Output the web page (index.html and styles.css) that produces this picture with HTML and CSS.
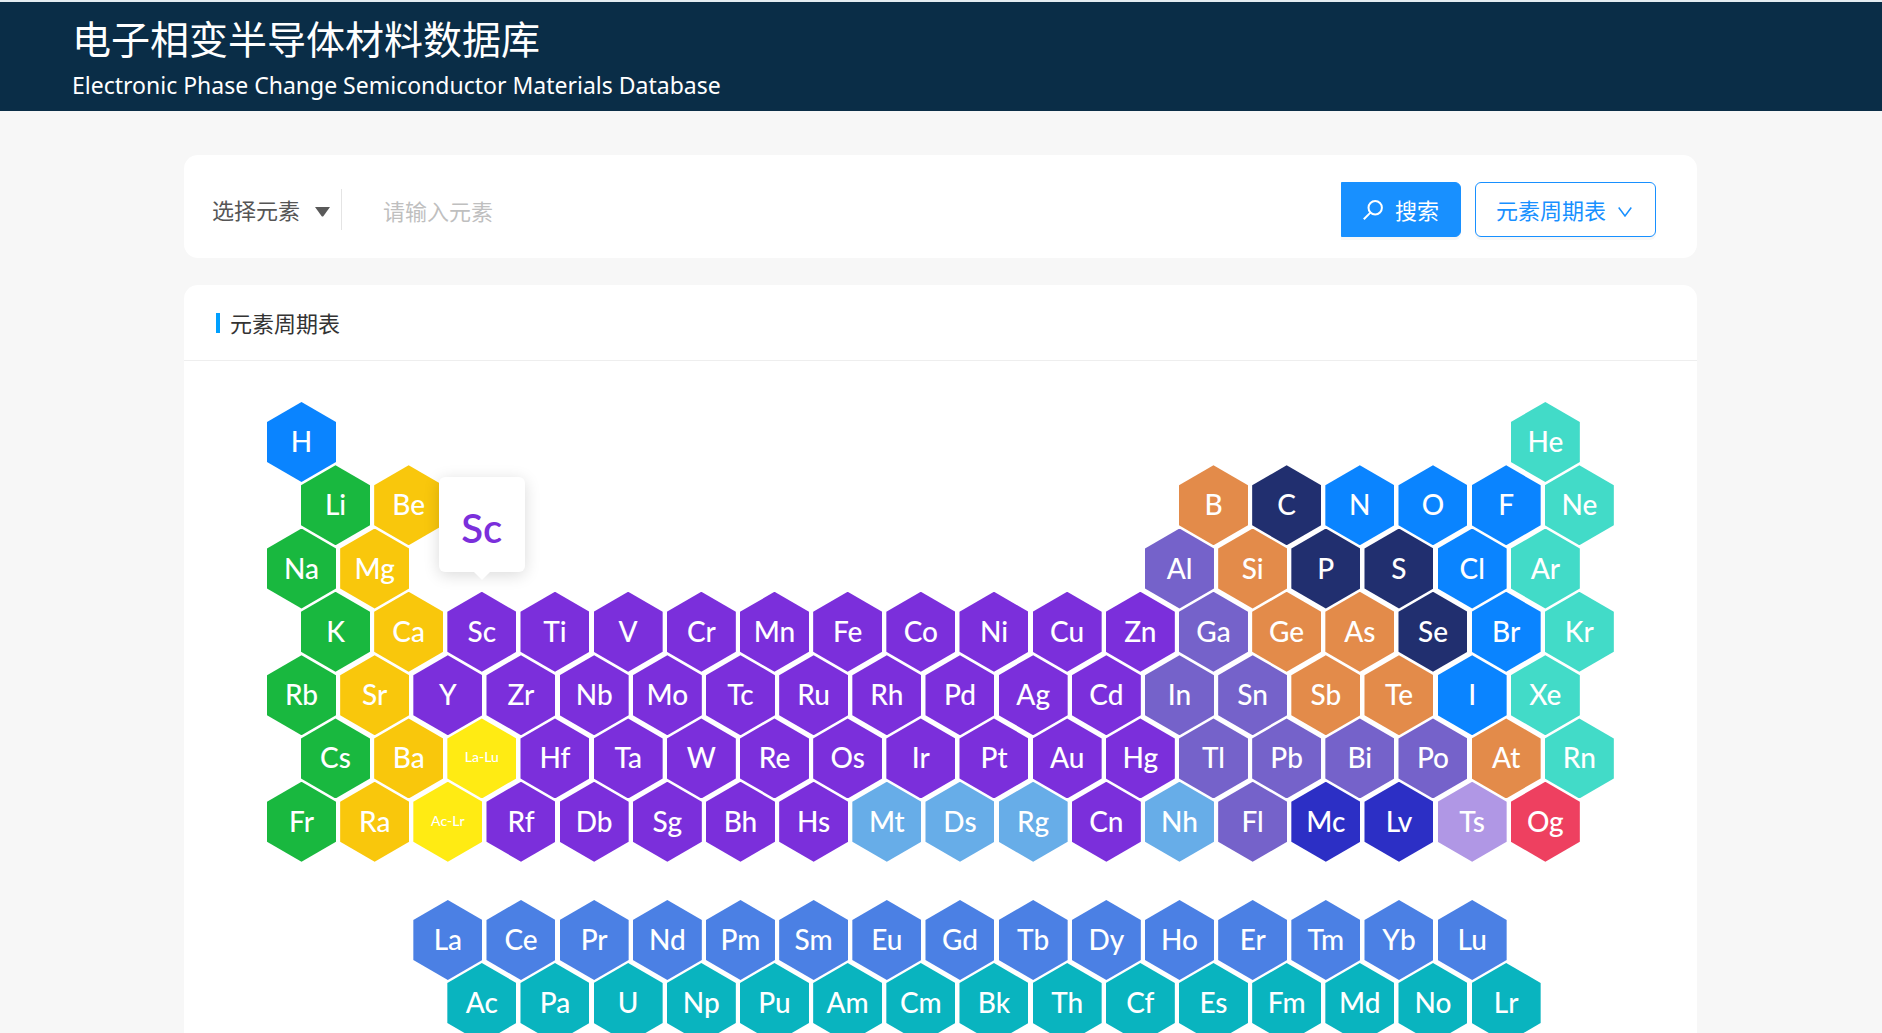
FILE: index.html
```html
<!DOCTYPE html>
<html lang="zh-CN">
<head>
<meta charset="utf-8">
<meta name="viewport" content="width=device-width, initial-scale=1">
<title>电子相变半导体材料数据库</title>
<link rel="stylesheet" href="styles.css">
</head>
<body>
<header class="site-header">
  <h1 class="site-title">电子相变半导体材料数据库</h1>
  <p class="site-subtitle">Electronic Phase Change Semiconductor Materials Database</p>
</header>
<main class="content">
  <form class="card search">
    <div class="picker">
      <select class="picker-select" aria-label="选择元素"><option>选择元素</option></select>
      <svg class="picker-caret" viewBox="0 0 15 10" aria-hidden="true"><path d="M0 0h15L8.500 9q-1 1-2 0z"/></svg>
    </div>
    <input class="search-input" type="text" placeholder="请输入元素" aria-label="请输入元素">
    <button class="btn btn-primary" type="submit">
      <svg class="icon-search" viewBox="0 0 20 20" aria-hidden="true"><circle cx="12.200" cy="7.800" r="6.700"/><path d="M7.400 12.600L.8 19.200"/></svg>
      搜索
    </button>
    <button class="btn btn-outline" type="button">
      元素周期表
      <svg class="icon-down" viewBox="0 0 14 10" aria-hidden="true"><path d="M.7.5L7 9 13.300.5"/></svg>
    </button>
  </form>

  <section class="card">
    <h2 class="card-title">元素周期表</h2>
    <div class="table">
      <div class="series series-main">
        <div class="row">
          <button class="hex nonmetal">H</button>
          <button class="hex noble col-18">He</button>
        </div>
        <div class="row shifted">
          <button class="hex alkali">Li</button>
          <button class="hex earth">Be</button>
          <button class="hex metalloid col-13">B</button>
          <button class="hex solid">C</button>
          <button class="hex nonmetal">N</button>
          <button class="hex nonmetal">O</button>
          <button class="hex nonmetal">F</button>
          <button class="hex noble">Ne</button>
        </div>
        <div class="row">
          <button class="hex alkali">Na</button>
          <button class="hex earth">Mg</button>
          <button class="hex post col-13">Al</button>
          <button class="hex metalloid">Si</button>
          <button class="hex solid">P</button>
          <button class="hex solid">S</button>
          <button class="hex nonmetal">Cl</button>
          <button class="hex noble">Ar</button>
        </div>
        <div class="row shifted">
          <button class="hex alkali">K</button>
          <button class="hex earth">Ca</button>
          <div class="cell">
            <button class="hex transition" aria-describedby="tip">Sc</button>
            <div class="tip" id="tip" role="tooltip">Sc</div>
          </div>
          <button class="hex transition">Ti</button>
          <button class="hex transition">V</button>
          <button class="hex transition">Cr</button>
          <button class="hex transition">Mn</button>
          <button class="hex transition">Fe</button>
          <button class="hex transition">Co</button>
          <button class="hex transition">Ni</button>
          <button class="hex transition">Cu</button>
          <button class="hex transition">Zn</button>
          <button class="hex post">Ga</button>
          <button class="hex metalloid">Ge</button>
          <button class="hex metalloid">As</button>
          <button class="hex solid">Se</button>
          <button class="hex nonmetal">Br</button>
          <button class="hex noble">Kr</button>
        </div>
        <div class="row">
          <button class="hex alkali">Rb</button>
          <button class="hex earth">Sr</button>
          <button class="hex transition">Y</button>
          <button class="hex transition">Zr</button>
          <button class="hex transition">Nb</button>
          <button class="hex transition">Mo</button>
          <button class="hex transition">Tc</button>
          <button class="hex transition">Ru</button>
          <button class="hex transition">Rh</button>
          <button class="hex transition">Pd</button>
          <button class="hex transition">Ag</button>
          <button class="hex transition">Cd</button>
          <button class="hex post">In</button>
          <button class="hex post">Sn</button>
          <button class="hex metalloid">Sb</button>
          <button class="hex metalloid">Te</button>
          <button class="hex nonmetal">I</button>
          <button class="hex noble">Xe</button>
        </div>
        <div class="row shifted">
          <button class="hex alkali">Cs</button>
          <button class="hex earth">Ba</button>
          <button class="hex range">La-Lu</button>
          <button class="hex transition">Hf</button>
          <button class="hex transition">Ta</button>
          <button class="hex transition">W</button>
          <button class="hex transition">Re</button>
          <button class="hex transition">Os</button>
          <button class="hex transition">Ir</button>
          <button class="hex transition">Pt</button>
          <button class="hex transition">Au</button>
          <button class="hex transition">Hg</button>
          <button class="hex post">Tl</button>
          <button class="hex post">Pb</button>
          <button class="hex post">Bi</button>
          <button class="hex post">Po</button>
          <button class="hex metalloid">At</button>
          <button class="hex noble">Rn</button>
        </div>
        <div class="row">
          <button class="hex alkali">Fr</button>
          <button class="hex earth">Ra</button>
          <button class="hex range">Ac-Lr</button>
          <button class="hex transition">Rf</button>
          <button class="hex transition">Db</button>
          <button class="hex transition">Sg</button>
          <button class="hex transition">Bh</button>
          <button class="hex transition">Hs</button>
          <button class="hex unknown">Mt</button>
          <button class="hex unknown">Ds</button>
          <button class="hex unknown">Rg</button>
          <button class="hex transition">Cn</button>
          <button class="hex unknown">Nh</button>
          <button class="hex post">Fl</button>
          <button class="hex heavy">Mc</button>
          <button class="hex heavy">Lv</button>
          <button class="hex halogen">Ts</button>
          <button class="hex oganesson">Og</button>
        </div>
      </div>
      <div class="series series-inner">
        <div class="row">
          <button class="hex lanthanide col-3">La</button>
          <button class="hex lanthanide">Ce</button>
          <button class="hex lanthanide">Pr</button>
          <button class="hex lanthanide">Nd</button>
          <button class="hex lanthanide">Pm</button>
          <button class="hex lanthanide">Sm</button>
          <button class="hex lanthanide">Eu</button>
          <button class="hex lanthanide">Gd</button>
          <button class="hex lanthanide">Tb</button>
          <button class="hex lanthanide">Dy</button>
          <button class="hex lanthanide">Ho</button>
          <button class="hex lanthanide">Er</button>
          <button class="hex lanthanide">Tm</button>
          <button class="hex lanthanide">Yb</button>
          <button class="hex lanthanide">Lu</button>
        </div>
        <div class="row shifted">
          <button class="hex actinide col-3">Ac</button>
          <button class="hex actinide">Pa</button>
          <button class="hex actinide">U</button>
          <button class="hex actinide">Np</button>
          <button class="hex actinide">Pu</button>
          <button class="hex actinide">Am</button>
          <button class="hex actinide">Cm</button>
          <button class="hex actinide">Bk</button>
          <button class="hex actinide">Th</button>
          <button class="hex actinide">Cf</button>
          <button class="hex actinide">Es</button>
          <button class="hex actinide">Fm</button>
          <button class="hex actinide">Md</button>
          <button class="hex actinide">No</button>
          <button class="hex actinide">Lr</button>
        </div>
      </div>
    </div>
  </section>
</main>
</body>
</html>
```
FILE: styles.css
```css
* {
  box-sizing: border-box;
}

body {
  margin: 0;
  background: #f7f7f7;
  color: #333;
  font-family: "Noto Sans", "Noto Sans CJK SC", sans-serif;
  font-size: 22px;
  line-height: 32px;
}

button,
input,
select {
  font: inherit;
}

/* Header */
.site-header {
  padding: 8px 72px 6px;
  border-top: 2px solid #e3ecf1;
  background: #0a2d47;
  color: #fff;
}

.site-title {
  margin: 0;
  font-family: "Noto Sans CJK SC", sans-serif;
  font-size: 39px;
  font-weight: 400;
  line-height: 55px;
}

.site-subtitle {
  margin: 0;
  font-size: 23px;
  line-height: 40px;
}

/* Cards */
.content {
  display: flex;
  flex-direction: column;
  gap: 27px;
  padding: 44px 185px 27px 184px;
}

.card {
  border-radius: 14px;
  background: #fff;
}

.card-title {
  display: flex;
  align-items: center;
  gap: 10px;
  margin: 0;
  padding: 22px 32px 21px;
  border-bottom: 1px solid #eee;
  font-size: 22px;
  font-weight: 400;
}

.card-title::before {
  content: "";
  width: 4px;
  height: 20px;
  background: #00a0ff;
}

/* Search bar */
.search {
  display: flex;
  align-items: center;
  padding: 27px 41px 21px 28px;
}

.picker {
  display: flex;
  align-items: center;
  height: 41px;
  padding-right: 11px;
  border-right: 1px solid #e4e4e4;
}

.picker-select {
  width: 118px;
  margin-right: -15px;
  padding: 0;
  border: 0;
  background: transparent;
  color: #555;
  appearance: none;
}

.picker-caret {
  width: 15px;
  height: 10px;
  margin-top: 4px;
  fill: #595959;
  pointer-events: none;
}

.search-input {
  flex: 1;
  min-width: 0;
  height: 55px;
  padding: 2px 41px 0;
  border: 0;
  background: transparent;
}

.search-input::placeholder {
  color: #bfbfbf;
}

.btn {
  display: flex;
  align-items: center;
  justify-content: center;
  height: 55px;
  padding: 0 21px;
  border: 1px solid #1890ff;
  box-shadow: 0 3px 0 rgba(0, 0, 0, 0.03);
}

.btn-primary {
  gap: 12px;
  border-radius: 0 6px 6px 0;
  background: #1890ff;
  color: #fff;
}

.btn-outline {
  gap: 12px;
  margin-left: 14px;
  padding: 0 23px 0 20px;
  border-radius: 6px;
  background: #fff;
  color: #1890ff;
}

.icon-search,
.icon-down {
  fill: none;
  stroke: currentColor;
}

.icon-search {
  width: 20px;
  height: 20px;
  stroke-width: 2;
}

.icon-down {
  width: 14px;
  height: 10px;
  margin-top: 4px;
  stroke-width: 1.5;
}

/* Periodic table: each hexagon is taller than its row, so rows interlock */
.table {
  padding: 41px 79px 29px 83px;
}

.series {
  display: grid;
  grid-auto-rows: 1fr;
}

.series-main {
  min-height: 443px;
}

.series-inner {
  min-height: 126px;
  margin-top: 55px;
}

.row {
  display: grid;
  grid-template-columns: repeat(18, 1fr);
  padding-right: 34px;
}

.shifted {
  padding-right: 0;
  padding-left: 34px;
}

.cell {
  position: relative;
  width: 69px;
}

.hex {
  width: 69px;
  height: 80px;
  margin-bottom: -17px;
  padding: 0 0 2px;
  border: 0;
  clip-path: polygon(50% 0, 100% 25%, 100% 75%, 50% 100%, 0 75%, 0 25%);
  color: #fff;
  font-family: Lato, sans-serif;
  font-size: 28px;
  font-weight: 500;
  line-height: 78px;
}

.col-3 { grid-column-start: 3; }
.col-13 { grid-column-start: 13; }
.col-18 { grid-column-start: 18; }

.nonmetal { background: #0a84ff; }
.noble { background: #42dbc8; }
.alkali { background: #19b83f; }
.earth { background: #f9c70c; }
.metalloid { background: #e38b4a; }
.solid { background: #212f6f; }
.post { background: #7562ca; }
.transition { background: #7b2fdb; }
.unknown { background: #67ade8; }
.heavy { background: #2c2fc5; }
.halogen { background: #b097e5; }
.oganesson { background: #ee4060; }
.lanthanide { background: #4b80e4; }
.actinide { background: #09b4bf; }

.range {
  background: #ffeb13;
  font-size: 14px;
}

.tip {
  position: absolute;
  z-index: 1;
  bottom: calc(100% + 20px);
  left: 50%;
  width: 86px;
  height: 95px;
  margin-left: -43px;
  border-radius: 6px;
  background: #fff;
  box-shadow: 0 3px 16px rgba(0, 0, 0, 0.15);
  color: #7b2fdb;
  font-family: Lato, sans-serif;
  font-size: 40px;
  font-weight: 600;
  line-height: 102px;
  text-align: center;
}

.tip::after {
  content: "";
  position: absolute;
  top: 100%;
  left: 50%;
  margin-left: -8px;
  border: 8px solid transparent;
  border-top-color: #fff;
  border-bottom-width: 0;
}
```
